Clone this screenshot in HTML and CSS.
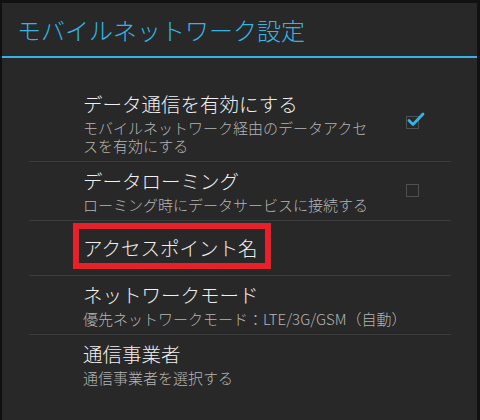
FILE: index.html
```html
<!DOCTYPE html>
<html lang="ja">
<head>
  <meta charset="UTF-8">
  <meta name="viewport" content="width=device-width, initial-scale=1.0">
  <title>モバイルネットワーク設定</title>
  <link rel="stylesheet" href="styles.css">
</head>
<body>
  <div class="dialog">
    <div class="dialog-title">モバイルネットワーク設定</div>

    <ul class="pref-list">
      <li class="pref-item pref-first">
        <div class="pref-text">
          <div class="pref-title">データ通信を有効にする</div>
          <div class="pref-summary">モバイルネットワーク経由のデータアクセスを有効にする</div>
        </div>
        <div class="pref-widget">
          <span class="checkbox">
            <svg class="check" width="20" height="20" viewBox="0 0 20 20">
              <path d="M3 9.5 L7 13.5 L17 3" fill="none" stroke="#33b5e5" stroke-width="2.8" stroke-linecap="round" stroke-linejoin="round"/>
            </svg>
          </span>
        </div>
      </li>
      <li class="pref-item">
        <div class="pref-text">
          <div class="pref-title">データローミング</div>
          <div class="pref-summary">ローミング時にデータサービスに接続する</div>
        </div>
        <div class="pref-widget">
          <span class="checkbox"></span>
        </div>
      </li>
      <li class="pref-item pref-single">
        <div class="pref-text">
          <div class="pref-title">アクセスポイント名</div>
        </div>
        <div class="highlight"></div>
      </li>
      <li class="pref-item">
        <div class="pref-text">
          <div class="pref-title">ネットワークモード</div>
          <div class="pref-summary">優先ネットワークモード：LTE/3G/GSM（自動）</div>
        </div>
      </li>
      <li class="pref-item pref-last">
        <div class="pref-text">
          <div class="pref-title">通信事業者</div>
          <div class="pref-summary">通信事業者を選択する</div>
        </div>
      </li>
    </ul>
  </div>
</body>
</html>
```

FILE: styles.css
```css
body {
  margin: 0;
  background-color: #111111;
  font-family: "Noto Sans CJK JP", "Noto Sans", sans-serif;
  font-weight: 300;
}

.dialog {
  margin: 3px 3px 0 2px;
  height: 417px;
  background-color: #282828;
  overflow: hidden;
}

.dialog-title {
  height: 53px;
  line-height: 53px;
  padding-left: 15px;
  font-size: 24px;
  color: #33b5e5;
  border-bottom: 2px solid #33b5e5;
}

.pref-list {
  list-style: none;
  margin: 0 26px 0 27px;
  padding: 27px 0 0;
}

.pref-item {
  position: relative;
  display: flex;
  align-items: center;
  padding: 4px 0 6px 54px;
  border-bottom: 1px solid #3c3c3c;
}

.pref-single {
  height: 54px;
  padding-top: 0;
  padding-bottom: 0;
}

.pref-last {
  border-bottom: none;
}

.pref-text {
  width: 292px;
}

.pref-title {
  font-size: 19.5px;
  line-height: 30px;
  color: #f0f0f0;
  white-space: nowrap;
}

.pref-summary {
  font-size: 15px;
  line-height: 18px;
  color: #b4b4b4;
}

.pref-item .pref-summary {
  white-space: nowrap;
}

.pref-first .pref-summary {
  white-space: normal;
}

.pref-widget {
  width: 75px;
  display: flex;
  justify-content: center;
}

.checkbox {
  position: relative;
  width: 11px;
  height: 11px;
  border: 1.5px solid #505050;
}

.check {
  position: absolute;
  left: -1px;
  top: -6px;
}

.highlight {
  position: absolute;
  left: 44px;
  top: 2px;
  width: 186px;
  height: 34px;
  border: 6px solid #e8202a;
}
```
